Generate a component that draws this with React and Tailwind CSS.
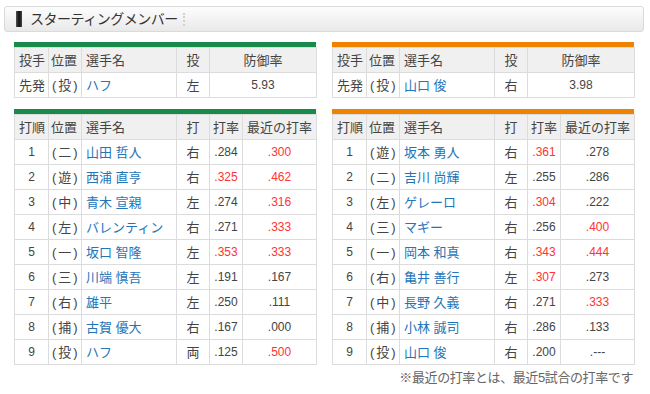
import React from "react";

const F = { fontFamily: '"Liberation Sans", "Noto Sans CJK JP", sans-serif' };

const left = [
  ["1", "(二)", "山田 哲人", "右", ".284", false, ".300", true],
  ["2", "(遊)", "西浦 直亨", "右", ".325", true, ".462", true],
  ["3", "(中)", "青木 宣親", "左", ".274", false, ".316", true],
  ["4", "(左)", "バレンティン", "右", ".271", false, ".333", true],
  ["5", "(一)", "坂口 智隆", "左", ".353", true, ".333", true],
  ["6", "(三)", "川端 慎吾", "左", ".191", false, ".167", false],
  ["7", "(右)", "雄平", "左", ".250", false, ".111", false],
  ["8", "(捕)", "古賀 優大", "右", ".167", false, ".000", false],
  ["9", "(投)", "ハフ", "両", ".125", false, ".500", true],
];
const right = [
  ["1", "(遊)", "坂本 勇人", "右", ".361", true, ".278", false],
  ["2", "(二)", "吉川 尚輝", "左", ".255", false, ".286", false],
  ["3", "(左)", "ゲレーロ", "右", ".304", true, ".222", false],
  ["4", "(三)", "マギー", "右", ".256", false, ".400", true],
  ["5", "(一)", "岡本 和真", "右", ".343", true, ".444", true],
  ["6", "(右)", "亀井 善行", "左", ".307", true, ".273", false],
  ["7", "(中)", "長野 久義", "右", ".271", false, ".333", true],
  ["8", "(捕)", "小林 誠司", "右", ".286", false, ".133", false],
  ["9", "(投)", "山口 俊", "右", ".200", false, ".---", false],
];

const td = "border border-[#dcdcdc] h-[25px] p-0 leading-none";
const th = "border border-[#dcdcdc] h-[25px] p-0 leading-none font-normal bg-[#f0f0f0]";

function Pos({ v }) {
  return (
    <span className="inline-flex items-center gap-[2px]">
      <span>(</span>
      <span>{v.slice(1, 2)}</span>
      <span>)</span>
    </span>
  );
}

function PitcherTable({ color, pos, name, hand, era }) {
  return (
    <div className="w-[302px]">
      <div className={`h-[5px] ${color}`} />
      <table className="w-[302px] border-collapse table-fixed text-[13px] text-[#444]">
        <colgroup>
          <col className="w-[34px]" />
          <col className="w-[33px]" />
          <col className="w-[95px]" />
          <col className="w-[33px]" />
          <col className="w-[107px]" />
        </colgroup>
        <thead>
          <tr>
            <th className={`${th} text-left pl-[4px]`}>投手</th>
            <th className={`${th} text-left pl-[2px]`}>位置</th>
            <th className={`${th} text-left pl-[4px]`}>選手名</th>
            <th className={`${th} text-center`}>投</th>
            <th className={`${th} text-center`}>防御率</th>
          </tr>
        </thead>
        <tbody>
          <tr className="bg-white">
            <td className={`${td} pl-[4px]`}>先発</td>
            <td className={`${td} pl-[3px]`}><Pos v={pos} /></td>
            <td className={`${td} pl-[4px] text-[#2474b8]`}>{name}</td>
            <td className={`${td} text-center`}>{hand}</td>
            <td className={`${td} text-center text-[12px]`}>{era}</td>
          </tr>
        </tbody>
      </table>
    </div>
  );
}

function LineupTable({ color, rows }) {
  return (
    <div className="w-[302px]">
      <div className={`h-[5px] ${color}`} />
      <table className="w-[302px] border-collapse table-fixed text-[13px] text-[#444]">
        <colgroup>
          <col className="w-[34px]" />
          <col className="w-[33px]" />
          <col className="w-[95px]" />
          <col className="w-[33px]" />
          <col className="w-[33px]" />
          <col className="w-[74px]" />
        </colgroup>
        <thead>
          <tr>
            <th className={`${th} text-left pl-[4px]`}>打順</th>
            <th className={`${th} text-left pl-[2px]`}>位置</th>
            <th className={`${th} text-left pl-[4px]`}>選手名</th>
            <th className={`${th} text-center`}>打</th>
            <th className={`${th} text-center`}>打率</th>
            <th className={`${th} text-center whitespace-nowrap`}>最近の打率</th>
          </tr>
        </thead>
        <tbody>
          {rows.map((r) => (
            <tr key={r[0]} className="bg-white">
              <td className={`${td} text-center text-[12px]`}>{r[0]}</td>
              <td className={`${td} pl-[3px]`}><Pos v={r[1]} /></td>
              <td className={`${td} pl-[4px] text-[#2474b8] whitespace-nowrap`}>{r[2]}</td>
              <td className={`${td} text-center`}>{r[3]}</td>
              <td className={`${td} text-center text-[12px] ${r[5] ? "text-[#ff3333]" : ""}`}>{r[4]}</td>
              <td className={`${td} text-center text-[12px] ${r[7] ? "text-[#ff3333]" : ""}`}>{r[6]}</td>
            </tr>
          ))}
        </tbody>
      </table>
    </div>
  );
}

export default function App() {
  return (
    <div className="w-[650px] h-[394px] bg-white overflow-hidden" style={F}>
      <div className="mx-[4px] mt-[6px] w-[640px] h-[26px] border border-[#dadada] rounded-[3px] bg-gradient-to-b from-[#fdfdfd] to-[#e9e9e9] flex items-center">
        <div className="ml-[11px] w-[6px] h-[16px] bg-gradient-to-r from-[#555] via-[#111] to-[#444]" />
        <span className="ml-[8px] text-[14px] text-[#333] tracking-[-0.5px]">スターティングメンバー</span>
        <div className="ml-[5px] h-[13px] border-l-2 border-dotted border-[#d0d0d0]" />
      </div>
      <div className="flex gap-[16px] pl-[14px] mt-[10px]">
        <PitcherTable color="bg-[#178a4c]" pos="(投)" name="ハフ" hand="左" era="5.93" />
        <PitcherTable color="bg-[#ef8200]" pos="(投)" name="山口 俊" hand="右" era="3.98" />
      </div>
      <div className="flex gap-[16px] pl-[14px] mt-[11px]">
        <LineupTable color="bg-[#178a4c]" rows={left} />
        <LineupTable color="bg-[#ef8200]" rows={right} />
      </div>
      <div className="w-[633px] text-right text-[13px] text-[#666] mt-[3px] tracking-[-0.4px]">
        ※最近の打率とは、最近5試合の打率です
      </div>
    </div>
  );
}
